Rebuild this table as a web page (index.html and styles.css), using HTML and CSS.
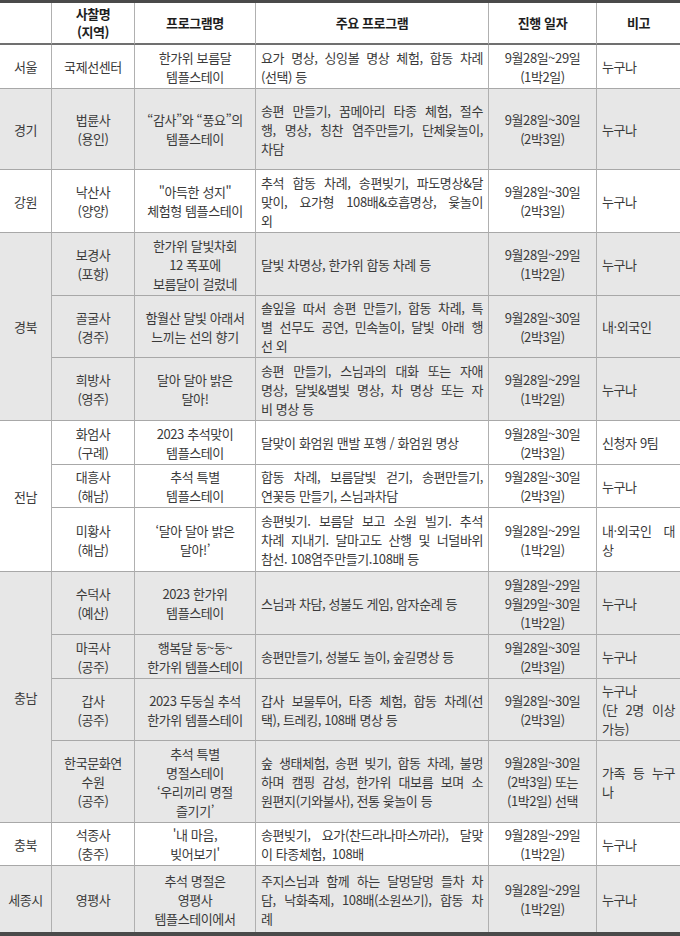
FILE: index.html
```html
<!DOCTYPE html>
<html lang="ko">
<head>
<meta charset="utf-8">
<title>추석 템플스테이</title>
<link rel="stylesheet" href="styles.css">
</head>
<body>
<table class="tbl">
  <colgroup>
    <col class="c-region"><col class="c-temple"><col class="c-name"><col class="c-prog"><col class="c-date"><col class="c-note">
  </colgroup>
  <thead>
    <tr class="head">
      <th>&nbsp;</th>
      <th>사찰명<br>(지역)</th>
      <th>프로그램명</th>
      <th>주요 프로그램</th>
      <th>진행 일자</th>
      <th class="last">비고</th>
    </tr>
  </thead>
  <tbody>
    <tr>
      <td class="ctr">서울</td>
      <td class="ctr">국제선센터</td>
      <td class="ctr">한가위 보름달<br>템플스테이</td>
      <td class="just"><span class="ln">요가 명상, 싱잉볼 명상 체험, 합동 차례</span><span class="ln">(선택) 등</span></td>
      <td class="ctr">9월28일~29일<br>(1박2일)</td>
      <td class="note last">누구나</td>
    </tr>
    <tr class="gray r-gyeonggi">
      <td class="ctr">경기</td>
      <td class="ctr">법륜사<br>(용인)</td>
      <td class="ctr">“감사”와 “풍요”의<br>템플스테이</td>
      <td class="just"><span class="ln">송편 만들기, 꿈메아리 타종 체험, 절수</span><span class="ln">행, 명상, 칭찬 염주만들기, 단체윷놀이,</span><span class="ln">차담</span></td>
      <td class="ctr">9월28일~30일<br>(2박3일)</td>
      <td class="note last">누구나</td>
    </tr>
    <tr>
      <td class="ctr">강원</td>
      <td class="ctr">낙산사<br>(양양)</td>
      <td class="ctr">"아득한 성지"<br>체험형 템플스테이</td>
      <td class="just"><span class="ln">추석 합동 차례, 송편빚기, 파도명상&amp;달</span><span class="ln">맞이, 요가형 108배&amp;호흡명상, 윷놀이</span><span class="ln">외</span></td>
      <td class="ctr">9월28일~30일<br>(2박3일)</td>
      <td class="note last">누구나</td>
    </tr>
    <tr class="gray">
      <td class="ctr" rowspan="3">경북</td>
      <td class="ctr">보경사<br>(포항)</td>
      <td class="ctr">한가위 달빛차회<br>12 폭포에<br>보름달이 걸렸네</td>
      <td class="just"><span class="ln">달빛 차명상, 한가위 합동 차례 등</span></td>
      <td class="ctr">9월28일~29일<br>(1박2일)</td>
      <td class="note last">누구나</td>
    </tr>
    <tr class="gray tight">
      <td class="ctr">골굴사<br>(경주)</td>
      <td class="ctr">함월산 달빛 아래서<br>느끼는 선의 향기</td>
      <td class="just"><span class="ln">솔잎을 따서 송편 만들기, 합동 차례, 특</span><span class="ln">별 선무도 공연, 민속놀이, 달빛 아래 행</span><span class="ln">선 외</span></td>
      <td class="ctr">9월28일~30일<br>(2박3일)</td>
      <td class="note last">내·외국인</td>
    </tr>
    <tr class="gray">
      <td class="ctr">희방사<br>(영주)</td>
      <td class="ctr">달아 달아 밝은<br>달아!</td>
      <td class="just"><span class="ln">송편 만들기, 스님과의 대화 또는 자애</span><span class="ln">명상, 달빛&amp;별빛 명상, 차 명상 또는 자</span><span class="ln">비 명상 등</span></td>
      <td class="ctr">9월28일~29일<br>(1박2일)</td>
      <td class="note last">누구나</td>
    </tr>
    <tr>
      <td class="ctr" rowspan="3">전남</td>
      <td class="ctr">화엄사<br>(구례)</td>
      <td class="ctr">2023 추석맞이<br>템플스테이</td>
      <td class="just"><span class="ln">달맞이 화엄원 맨발 포행 / 화엄원 명상</span></td>
      <td class="ctr">9월28일~30일<br>(2박3일)</td>
      <td class="note last">신청자 9팀</td>
    </tr>
    <tr class="tight">
      <td class="ctr">대흥사<br>(해남)</td>
      <td class="ctr">추석 특별<br>템플스테이</td>
      <td class="just"><span class="ln">합동 차례, 보름달빛 걷기, 송편만들기,</span><span class="ln">연꽃등 만들기, 스님과차담</span></td>
      <td class="ctr">9월28일~30일<br>(2박3일)</td>
      <td class="note last">누구나</td>
    </tr>
    <tr class="r-mihwang">
      <td class="ctr">미황사<br>(해남)</td>
      <td class="ctr">‘달아 달아 밝은<br>달아!’</td>
      <td class="just"><span class="ln">송편빚기. 보름달 보고 소원 빌기. 추석</span><span class="ln">차례 지내기. 달마고도 산행 및 너덜바위</span><span class="ln">참선. 108염주만들기.108배 등</span></td>
      <td class="ctr">9월28일~29일<br>(1박2일)</td>
      <td class="note just last"><span class="ln">내·외국인 대</span><span class="ln">상</span></td>
    </tr>
    <tr class="gray">
      <td class="ctr" rowspan="4">충남</td>
      <td class="ctr">수덕사<br>(예산)</td>
      <td class="ctr">2023 한가위<br>템플스테이</td>
      <td class="just"><span class="ln">스님과 차담, 성불도 게임, 암자순례 등</span></td>
      <td class="ctr">9월28일~29일<br>9월29일~30일<br>(1박2일)</td>
      <td class="note last">누구나</td>
    </tr>
    <tr class="gray">
      <td class="ctr">마곡사<br>(공주)</td>
      <td class="ctr">행복달 둥~둥~<br>한가위 템플스테이</td>
      <td class="just"><span class="ln">송편만들기, 성불도 놀이, 숲길명상 등</span></td>
      <td class="ctr">9월28일~30일<br>(2박3일)</td>
      <td class="note last">누구나</td>
    </tr>
    <tr class="gray tight">
      <td class="ctr">갑사<br>(공주)</td>
      <td class="ctr">2023 두둥실 추석<br>한가위 템플스테이</td>
      <td class="just"><span class="ln">갑사 보물투어, 타종 체험, 합동 차례(선</span><span class="ln">택), 트레킹, 108배 명상 등</span></td>
      <td class="ctr">9월28일~30일<br>(2박3일)</td>
      <td class="note just last"><span class="ln nj">누구나</span><span class="ln">(단 2명 이상</span><span class="ln">가능)</span></td>
    </tr>
    <tr class="gray">
      <td class="ctr">한국문화연<br>수원<br>(공주)</td>
      <td class="ctr">추석 특별<br>명절스테이<br>‘우리끼리 명절<br>즐기기’</td>
      <td class="just"><span class="ln">숲 생태체험, 송편 빚기, 합동 차례, 불멍</span><span class="ln">하며 캠핑 감성, 한가위 대보름 보며 소</span><span class="ln">원편지(기와불사), 전통 윷놀이 등</span></td>
      <td class="ctr">9월28일~30일<br>(2박3일) 또는<br>(1박2일) 선택</td>
      <td class="note just last"><span class="ln">가족 등 누구</span><span class="ln">나</span></td>
    </tr>
    <tr class="tight">
      <td class="ctr">충북</td>
      <td class="ctr">석종사<br>(충주)</td>
      <td class="ctr">'내 마음,<br>빚어보기'</td>
      <td class="just"><span class="ln">송편빚기, 요가(찬드라나마스까라), 달맞</span><span class="ln">이 타종체험, &nbsp;108배</span></td>
      <td class="ctr">9월28일~29일<br>(1박2일)</td>
      <td class="note last">누구나</td>
    </tr>
    <tr class="gray r-sejong">
      <td class="ctr">세종시</td>
      <td class="ctr">영평사</td>
      <td class="ctr">추석 명절은<br>영평사<br>템플스테이에서</td>
      <td class="just"><span class="ln">주지스님과 함께 하는 달멍달멍 들차 차</span><span class="ln">담, 낙화축제, 108배(소원쓰기), 합동 차</span><span class="ln">례</span></td>
      <td class="ctr">9월28일~29일<br>(1박2일)</td>
      <td class="note last">누구나</td>
    </tr>
  </tbody>
</table>
</body>
</html>
```

FILE: styles.css
```css
html, body {
  margin: 0;
  padding: 0;
  background: #ffffff;
}

.tbl {
  width: 680px;
  table-layout: fixed;
  border-collapse: separate;
  border-spacing: 0;
  border-top: 3px solid #4a4a4a;
  border-bottom: 4px solid #4a4a4a;
  font-family: "Noto Sans CJK KR", "Noto Sans", sans-serif;
  font-size: 13px;
  letter-spacing: -0.4px;
  color: #3a3a3a;
}

.c-region { width: 52px; }
.c-temple { width: 83px; }
.c-name { width: 121px; }
.c-prog { width: 233px; }
.c-date { width: 108px; }
.c-note { width: 83px; }

.tbl th,
.tbl td {
  border-right: 1px solid #b0b0b0;
  border-bottom: 1px solid #a8a8a8;
  padding: 2.5px 5px;
  vertical-align: middle;
  line-height: 19px;
}

.tbl th.last,
.tbl td.last {
  border-right: none;
}

.tbl tbody tr:last-child td {
  border-bottom: none;
}

.head th {
  font-weight: 700;
  color: #1e1e1e;
  line-height: 18px;
  padding: 2px 5px;
  text-align: center;
  border-bottom: 2px solid #707070;
}

.gray td {
  background: #e7e7e7;
}

.tbl .tight td {
  padding-top: 2px;
  padding-bottom: 2px;
}

.ctr {
  text-align: center;
}

.note {
  text-align: left;
}

.just .ln {
  display: block;
  text-align: justify;
  text-align-last: justify;
}

.just .ln:last-child,
.just .ln.nj {
  text-align-last: left;
}

.r-gyeonggi {
  height: 81px;
}

.r-mihwang {
  height: 64px;
}

.r-sejong {
  height: 66px;
}
```
